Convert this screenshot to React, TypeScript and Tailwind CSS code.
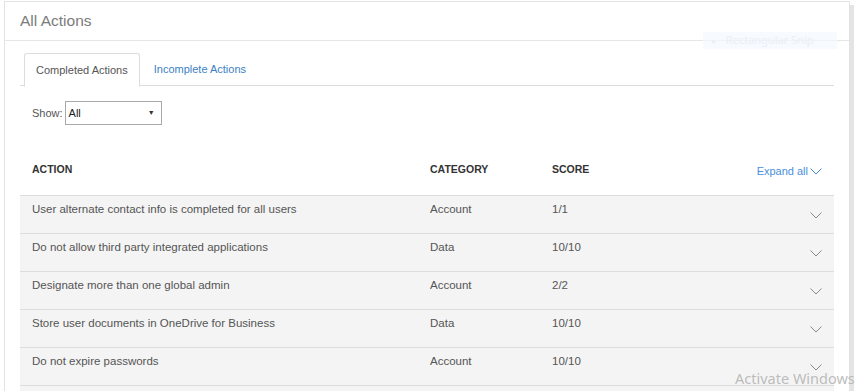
const rows = [
    { action: 'User alternate contact info is completed for all users', category: 'Account', score: '1/1' },
    { action: 'Do not allow third party integrated applications', category: 'Data', score: '10/10' },
    { action: 'Designate more than one global admin', category: 'Account', score: '2/2' },
    { action: 'Store user documents in OneDrive for Business', category: 'Data', score: '10/10' },
    { action: 'Do not expire passwords', category: 'Account', score: '10/10' },
];

function Chevron({ color = '#8a8a8a' }: { color?: string }) {
    return (
        <svg width="12" height="7" viewBox="0 0 12 7" fill="none">
            <polyline points="0.5,0.5 6,6 11.5,0.5" stroke={color} strokeWidth="1" />
        </svg>
    );
}

export default function App() {
    return (
        <div className="relative w-[863px] h-[391px] overflow-hidden bg-white font-['Liberation_Sans',Arial,sans-serif]">
            <div className="flex pl-[4px] pt-[1px]">
                <div className="w-[846px] h-[420px] border border-[#e3e3e3] bg-white">
                    <div className="h-[39px] flex items-center pl-[15px] border-b border-[#e6e6e6]">
                        <span className="text-[15.5px] text-[#7b7b7b]">All Actions</span>
                    </div>

                    <div className="px-[15px] pt-[12px]">
                        <div className="flex border-b border-[#dddddd] h-[33px]">
                            <div className="ml-[4px] h-[34px] px-[11px] flex items-center border border-[#dddddd] border-b-white bg-white rounded-t-[3px] text-[11px] text-[#555]">
                                Completed Actions
                            </div>
                            <div className="ml-[2px] px-[12px] flex items-center text-[11px] text-[#3b7fc4]">
                                Incomplete Actions
                            </div>
                        </div>

                        <div className="flex items-center mt-[15px] pl-[12px]">
                            <span className="text-[11px] text-[#555] mr-[2px]">Show:</span>
                            <div className="w-[97px] h-[24px] border border-[#a9a9a9] flex items-center justify-between pl-[3px] pr-[6px] text-[11px] text-[#222]">
                                <span>All</span>
                                <span className="text-[7px] text-[#333]">▼</span>
                            </div>
                        </div>

                        <div className="mt-[15px]">
                            <div className="h-[55px] grid grid-cols-[398px_122px_1fr_auto] items-center pl-[12px] pr-[12px] pt-[4px]">
                                <span className="text-[10.5px] font-bold text-[#333]">ACTION</span>
                                <span className="text-[10.5px] font-bold text-[#333]">CATEGORY</span>
                                <span className="text-[10.5px] font-bold text-[#333]">SCORE</span>
                                <span className="flex items-center gap-[2px] text-[11px] text-[#4a8fdb] pt-[4px]">
                                    Expand all
                                    <Chevron color="#4a8fdb" />
                                </span>
                            </div>
                            {rows.map((r) => (
                                <div
                                    key={r.action}
                                    className="h-[38px] grid grid-cols-[398px_122px_1fr_auto] border-t border-[#dddddd] bg-[#f4f4f4] pl-[12px] pr-[12px] text-[11.5px] leading-[16px] text-[#555]"
                                >
                                    <span className="pt-[5px]">{r.action}</span>
                                    <span className="pt-[5px]">{r.category}</span>
                                    <span className="pt-[5px]">{r.score}</span>
                                    <span className="flex items-center pt-[2px]">
                                        <Chevron />
                                    </span>
                                </div>
                            ))}
                            <div className="h-[38px] border-t border-[#dddddd] bg-[#f4f4f4]"></div>
                        </div>
                    </div>
                </div>
                <div className="w-[4px] h-[420px] mt-[4px] bg-[#e4e4e4]"></div>
            </div>

            <div className="absolute left-[703px] top-[32px] w-[134px] h-[17px] bg-[#f3f8fe]/70 flex items-center gap-[10px] pl-[8px] text-[11px] text-[#eaf0f8] font-['Noto_Sans',sans-serif]">
                <span className="text-[8px]">●</span>
                <span>Rectangular Snip</span>
            </div>

            <div className="absolute left-[735px] top-[368px] text-[14.5px] text-[#b5b5b5]/90 font-['Noto_Sans',sans-serif]">
                Activate Windows
            </div>
        </div>
    );
}
